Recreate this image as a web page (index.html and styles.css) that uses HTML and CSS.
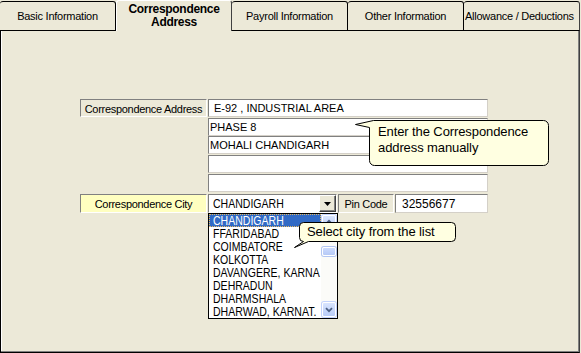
FILE: index.html
```html
<!DOCTYPE html>
<html>
<head>
<meta charset="utf-8">
<title>Correspondence Address</title>
<link rel="stylesheet" href="styles.css">
</head>
<body>
<div class="window">
  <div class="tabs">
    <div class="tab">Basic Information</div>
    <div class="tab active">Correspondence<br>Address</div>
    <div class="tab">Payroll Information</div>
    <div class="tab">Other Information</div>
    <div class="tab tab-last">Allowance / Deductions</div>
  </div>
  <div class="panel">
    <div class="form">
      <div class="addr-row">
        <div class="label">Correspondence Address</div>
        <div class="fields">
          <div class="field indent">E-92 , INDUSTRIAL AREA</div>
          <div class="field">PHASE 8</div>
          <div class="field snug">MOHALI CHANDIGARH</div>
          <div class="field"></div>
          <div class="field"></div>
        </div>
      </div>
      <div class="city-row">
        <div class="label label-city">Correspondence City</div>
        <div class="combo">
          <span class="combo-text"><span class="narrow">CHANDIGARH</span></span>
          <span class="combo-btn"><svg width="7" height="4" viewBox="0 0 7 4"><polygon points="0,0 7,0 3.5,4" fill="#000"/></svg></span>
          <div class="dropdown">
            <div class="list">
              <div class="item selected"><span class="narrow">CHANDIGARH</span></div>
              <div class="item"><span class="narrow">FFARIDABAD</span></div>
              <div class="item"><span class="narrow">COIMBATORE</span></div>
              <div class="item"><span class="narrow">KOLKOTTA</span></div>
              <div class="item"><span class="narrow">DAVANGERE, KARNA</span></div>
              <div class="item"><span class="narrow">DEHRADUN</span></div>
              <div class="item"><span class="narrow">DHARMSHALA</span></div>
              <div class="item"><span class="narrow">DHARWAD, KARNAT.</span></div>
            </div>
            <div class="sb">
              <div class="sb-btn"><svg width="14" height="13" viewBox="0 0 14 13"><polyline points="3.5,8 7,4.5 10.5,8" fill="none" stroke="#4D6185" stroke-width="2"/></svg></div>
              <div class="sb-thumb"></div>
              <div class="sb-btn"><svg width="14" height="13" viewBox="0 0 14 13"><polyline points="3.5,5 7,8.5 10.5,5" fill="none" stroke="#4D6185" stroke-width="2"/></svg></div>
            </div>
          </div>
        </div>
        <div class="label label-pin">Pin Code</div>
        <div class="field field-pin">32556677</div>
      </div>
    </div>
  </div>

  <div class="balloon balloon-addr">
    <svg class="balloon-shape" width="196" height="50" viewBox="0 0 196 50"><path d="M0.5,6.5 L18.5,2.5 H188.5 A5,5 0 0 1 193.5,7.5 V42.5 A5,5 0 0 1 188.5,47.5 H19.5 A5,5 0 0 1 14.5,42.5 V9.5 Z" fill="#FFFFE1" stroke="#000"/></svg>
    <div class="balloon-text">Enter the Correspondence<br>address manually</div>
  </div>

  <div class="balloon balloon-city">
    <svg class="balloon-shape" width="166" height="30" viewBox="0 0 166 30"><path d="M11.5,2.5 H159.5 A4,4 0 0 1 163.5,6.5 V17.5 A4,4 0 0 1 159.5,21.5 H16.5 L2.5,27.5 L11.5,21.5 A4,4 0 0 1 7.5,17.5 V6.5 A4,4 0 0 1 11.5,2.5 Z" fill="#FFFFE1" stroke="#000"/></svg>
    <div class="balloon-text">Select city from the list</div>
  </div>
</div>
</body>
</html>
```

FILE: styles.css
```css
* { box-sizing: border-box; }

body {
  margin: 0;
  width: 581px;
  height: 353px;
  overflow: hidden;
  background: #ECE9D8;
  font-family: "Liberation Sans", Arial, sans-serif;
  font-size: 11px;
  color: #000;
}

.window {
  position: relative;
  width: 581px;
  height: 353px;
}

/* Tabs */
.tabs {
  display: flex;
  align-items: flex-end;
  height: 31px;
  width: 580px;
}

.tab {
  width: 116px;
  height: 30px;
  border: 1px solid #000;
  border-left: none;
  border-top-left-radius: 3px;
  border-top-right-radius: 3px;
  display: flex;
  align-items: center;
  justify-content: center;
  white-space: nowrap;
  overflow: hidden;
  letter-spacing: -0.25px;
  background: #ECE9D8;
}

.tab.active {
  height: 31px;
  border-top: 1px solid #fff;
  border-left: 1px solid #fff;
  border-right: 1px solid #404040;
  border-bottom: none;
  font-weight: bold;
  font-size: 12px;
  line-height: 13px;
  letter-spacing: -0.3px;
  text-align: center;
  padding-bottom: 1px;
}

.tab-last {
  justify-content: flex-start;
  padding-left: 1px;
  border-right-color: #404040;
}

/* Panel */
.panel {
  width: 580px;
  height: 322px;
  border-left: 1px solid #000;
  border-right: 1px solid #404040;
  border-bottom: 1px solid #000;
  box-shadow: inset -1px -1px 0 #808080, inset 1px 0 0 #fff;
  padding: 68px 0 0 79px;
}

.form {
  display: flex;
  flex-direction: column;
  gap: 2px;
}

.addr-row {
  display: flex;
  align-items: flex-start;
  gap: 1px;
}

.label {
  width: 127px;
  height: 18px;
  border: 1px solid;
  border-color: #808080 #fff #fff #808080;
  display: flex;
  align-items: center;
  justify-content: center;
  padding-top: 1px;
  white-space: nowrap;
  letter-spacing: -0.3px;
}

.fields {
  display: flex;
  flex-direction: column;
  gap: 1px;
}

.field {
  width: 280px;
  height: 18px;
  background: #fff;
  border: 1px solid;
  border-color: #808080 #D4D0C8 #D4D0C8 #808080;
  padding: 1px 0 0 1px;
  line-height: 15px;
  white-space: nowrap;
  overflow: hidden;
}

.field.indent { padding-left: 5px; }
.field.snug { margin-top: -1px; }

/* City row */
.city-row {
  display: flex;
  gap: 1px;
  height: 19px;
}

.label-city {
  height: 19px;
  background: #FFFFC0;
}

.label-pin {
  width: 56px;
  height: 19px;
}

.field-pin {
  width: 93px;
  height: 19px;
  padding: 1px 0 0 6px;
  line-height: 16px;
  font-size: 12px;
}

.narrow {
  display: inline-block;
  vertical-align: top;
  font-size: 13px;
  transform: scaleX(0.81);
  transform-origin: 0 50%;
  white-space: nowrap;
}

.combo {
  position: relative;
  width: 129px;
  height: 19px;
  background: #fff;
  border: 1px solid;
  border-color: #808080 #fff #fff #808080;
  display: flex;
}

.combo-text {
  flex: 1;
  padding-left: 4px;
  line-height: 17px;
  white-space: nowrap;
  overflow: hidden;
}

.combo-text .narrow { line-height: 17px; }

.combo-btn {
  width: 17px;
  height: 17px;
  background: #ECE9D8;
  border: 1px solid;
  border-color: #fff #404040 #404040 #fff;
  box-shadow: inset -1px -1px 0 #808080;
  display: flex;
  align-items: center;
  justify-content: center;
  padding-top: 1px;
}

.combo-btn svg { display: block; }

/* Dropdown list */
.dropdown {
  position: absolute;
  left: -1px;
  top: 18px;
  width: 130px;
  height: 106px;
  background: #fff;
  border: 1px solid #000;
  display: flex;
  z-index: 2;
}

.list {
  width: 112px;
  overflow: hidden;
}

.item {
  height: 13px;
  padding: 1px 0 0 4px;
  line-height: 12px;
  white-space: nowrap;
}

.item .narrow { line-height: 12px; }

.item.selected {
  background: #316AC5;
  color: #fff;
  border: 1px dotted #E8B860;
  padding: 0 0 0 3px;
  line-height: 11px;
}

.item.selected .narrow { line-height: 12px; }

.sb {
  position: relative;
  width: 16px;
  background: #FBFBF8;
  display: flex;
  flex-direction: column;
  justify-content: space-between;
  padding: 1px 0;
}

.sb-btn {
  height: 15px;
  margin: 0 1px;
  border: 1px solid #fff;
  border-radius: 2px;
  background: linear-gradient(#D8E4FE, #B9CCF7);
  box-shadow: 0 0 0 1px #C3D3FD;
  display: flex;
  align-items: center;
  justify-content: center;
}

.sb-btn svg { display: block; }

.sb-thumb {
  position: absolute;
  left: 1px;
  top: 33px;
  width: 14px;
  height: 9px;
  border-radius: 2px;
  border: 1px solid #fff;
  background: linear-gradient(#CCDBFD, #B6C9F6);
  box-shadow: 0 0 0 1px #B3C6F2;
}

/* Balloons (tooltips) */
.balloon {
  position: absolute;
  z-index: 5;
}

.balloon-shape {
  position: absolute;
  left: 0;
  top: 0;
  display: block;
}

.balloon-text {
  position: relative;
  font-size: 13px;
  white-space: nowrap;
  letter-spacing: -0.1px;
}

.balloon-addr {
  left: 355px;
  top: 118px;
  width: 196px;
  height: 50px;
}

.balloon-addr .balloon-text {
  padding: 6px 0 0 23px;
  line-height: 16px;
}

.balloon-city {
  left: 292px;
  top: 220px;
  width: 166px;
  height: 30px;
}

.balloon-city .balloon-text {
  padding: 4px 0 0 15px;
  line-height: 15px;
}
```
